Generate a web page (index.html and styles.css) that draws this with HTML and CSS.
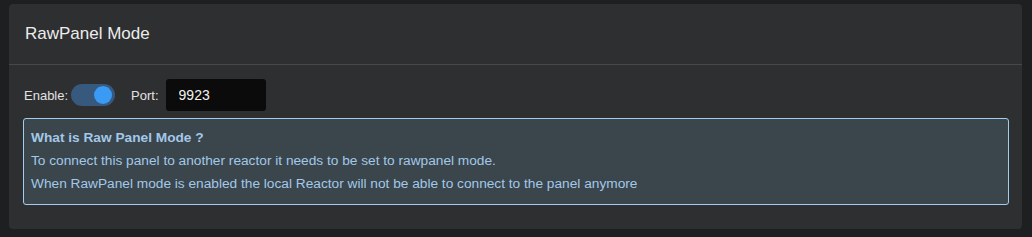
FILE: index.html
```html
<!DOCTYPE html>
<html lang="en">
<head>
    <meta charset="UTF-8">
    <meta name="viewport" content="width=device-width, initial-scale=1.0">
    <title>RawPanel Mode</title>
    <link rel="stylesheet" href="styles.css">
</head>
<body>
    <div class="card">
        <!-- Header -->
        <div class="card-header">RawPanel Mode</div>

        <!-- Body -->
        <div class="card-body">
            <div class="settings-row">
                <span class="label">Enable:</span>
                <label class="switch">
                    <input type="checkbox" checked>
                    <span class="slider"></span>
                </label>
                <span class="label port-label">Port:</span>
                <input type="text" class="input-field" value="9923">
            </div>
            <div class="info-box">
                <div class="info-title">What is Raw Panel Mode ?</div>
                <div class="info-line">To connect this panel to another reactor it needs to be set to rawpanel mode.</div>
                <div class="info-line">When RawPanel mode is enabled the local Reactor will not be able to connect to the panel anymore</div>
            </div>
        </div>
    </div>
</body>
</html>
```

FILE: styles.css
```css
body {
    font-family: 'Liberation Sans', Arial, sans-serif;
    margin: 0;
    padding: 4px 10px 0 9px;
    background-color: #1e1f21;
    color: #e6e6e6;
}
.card {
    background: #2e2f31;
    border-radius: 4px;
    height: 225px;
    box-sizing: border-box;
}
.card-header {
    height: 61px;
    box-sizing: border-box;
    padding: 20px 16px 0;
    font-size: 17px;
    color: #ececec;
    border-bottom: 1px solid #47484a;
}
.card-body {
    padding: 14px 14px 0 15px;
}
.settings-row {
    display: flex;
    align-items: center;
    height: 32px;
}
.label {
    font-size: 13px;
    color: #e2e2e2;
}
.port-label {
    margin-left: 16px;
    margin-right: 7px;
}
.switch {
    position: relative;
    display: inline-block;
    width: 44px;
    height: 22px;
    margin-left: 3px;
}
.switch input {
    display: none;
}
.slider {
    position: absolute;
    inset: 0;
    background-color: #37597e;
    border-radius: 11px;
}
.slider::before {
    content: '';
    position: absolute;
    width: 18px;
    height: 18px;
    right: 3px;
    top: 2px;
    border-radius: 50%;
    background-color: #3a9af4;
}
.input-field {
    width: 100px;
    height: 32px;
    box-sizing: border-box;
    padding: 0 13px;
    font-family: inherit;
    font-size: 14px;
    color: #f2f2f2;
    background-color: #0b0b0b;
    border: none;
    border-radius: 3px;
}
.info-box {
    margin-top: 7px;
    margin-left: -1px;
    width: 986px;
    height: 87px;
    box-sizing: border-box;
    padding: 9px 7px 0;
    background-color: #3a454c;
    border: 1px solid #a3cdee;
    border-radius: 3px;
    color: #a3c8e8;
    font-size: 13.7px;
}
.info-title {
    font-weight: bold;
    line-height: 20px;
    margin-bottom: 1px;
}
.info-line {
    line-height: 23px;
}
```
